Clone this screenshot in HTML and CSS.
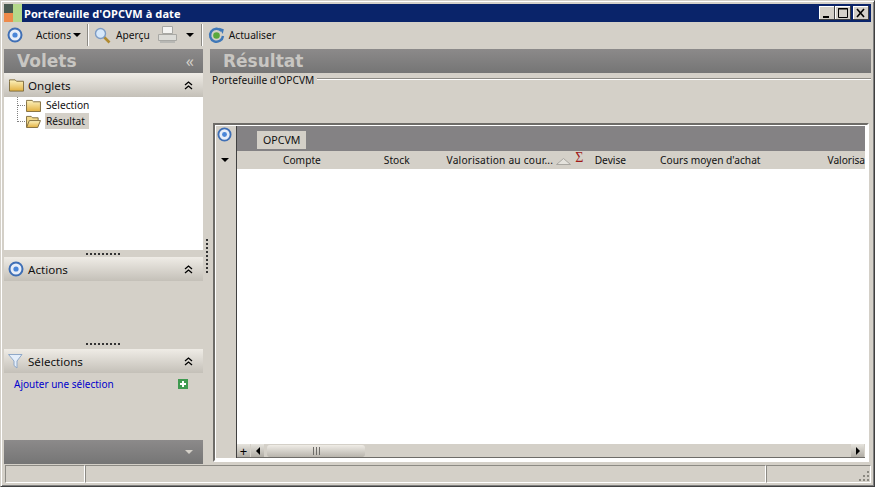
FILE: index.html
```html
<!DOCTYPE html>
<html lang="fr">
<head>
    <meta charset="UTF-8">
    <title>Portefeuille d'OPCVM à date</title>
    <link rel="stylesheet" href="styles.css">
</head>
<body>
<svg class="defs" width="0" height="0">
    <defs>
        <linearGradient id="folderFill" x1="0" y1="0" x2="0" y2="1">
            <stop offset="0" stop-color="#fdf3c0"/>
            <stop offset="1" stop-color="#e2b040"/>
        </linearGradient>
        <symbol id="target" viewBox="0 0 16 16">
            <circle cx="8" cy="8" r="6.5" fill="#e8eef8" stroke="#3f6fb5" stroke-width="2"/>
            <circle cx="8" cy="8" r="2.6" fill="#4a86d8"/>
        </symbol>
        <symbol id="folder" viewBox="0 0 16 14">
            <path d="M.5 3V1.5h6L8 3h7.5v10.5H.5z" fill="url(#folderFill)" stroke="#7d6a3a"/>
        </symbol>
        <symbol id="folderOpen" viewBox="0 0 16 14">
            <path d="M.5 13V1.5h5L7 3h6v3" fill="#f2d98a" stroke="#7d6a3a"/>
            <path d="M.5 13.5 3.5 6h12l-3 7.5z" fill="url(#folderFill)" stroke="#7d6a3a"/>
        </symbol>
    </defs>
</svg>
<div class="window">
    <div class="titlebar">
        <svg class="app-icon" width="18" height="18" viewBox="0 0 18 18">
            <rect width="9" height="9" fill="#4a5a50"/>
            <rect x="9" width="9" height="18" fill="#b4d88a"/>
            <rect y="9" width="9" height="9" fill="#ee8a4a"/>
        </svg>
        <span class="title-text">Portefeuille d'OPCVM à date</span>
        <div class="win-buttons">
            <div class="win-btn"><svg width="16" height="14"><rect x="4" y="10" width="6" height="2" fill="#000"/></svg></div>
            <div class="win-btn"><svg width="16" height="14"><path d="M3.5 2.5h9v9h-9z M3 3h10" fill="none" stroke="#000"/></svg></div>
            <div class="win-btn win-btn-close"><svg width="16" height="14"><path d="M4 3l7 8M11 3l-7 8" stroke="#000" stroke-width="1.6"/></svg></div>
        </div>
    </div>

    <div class="toolbar">
        <svg class="tb-target" width="16" height="16"><use href="#target"/></svg>
        <span class="tb-label tb-actions">Actions</span><span class="caret"></span>
        <span class="tb-sep"></span>
        <svg class="tb-zoom" width="17" height="17" viewBox="0 0 17 17">
            <path d="M10 10l5.500 5.500" stroke="#b08a30" stroke-width="2.600"/>
            <circle cx="6.500" cy="6.500" r="5" fill="#d6e8fa" stroke="#7d9cc4" stroke-width="1.400"/>
        </svg>
        <span class="tb-label tb-apercu">Aperçu</span>
        <svg class="tb-print" width="19" height="18" viewBox="0 0 19 18">
            <path d="M4.500.5h10v7h-10z" fill="#f4f4f2" stroke="#a8a8a4"/>
            <path d="M.5 8.500h18v6H.5z" fill="#dcdcd8" stroke="#a8a8a4"/>
            <path d="M2 15h15v2H2z" fill="#b8b8b4"/>
        </svg>
        <span class="caret caret-print"></span>
        <span class="tb-sep"></span>
        <svg class="tb-refresh" width="17" height="17" viewBox="0 0 17 17">
            <path d="M13.500 4A6.500 6.500 0 1 0 15 9" fill="none" stroke="#3f78b8" stroke-width="2.400"/>
            <path d="M11 .8l4.800 1.500-1 4.700z" fill="#3f78b8"/>
            <circle cx="8.500" cy="8.500" r="3.300" fill="#5aa83c"/>
        </svg>
        <span class="tb-label tb-refresh-label">Actualiser</span>
    </div>

    <div class="main">
        <div class="sidebar">
            <div class="dark-head">
                <span class="dark-title">Volets</span>
                <span class="collapse-left">«</span>
            </div>

            <div class="section-head">
                <svg class="section-folder" width="15" height="14"><use href="#folder"/></svg>
                <span class="section-label">Onglets</span>
                <span class="chevrons">
                    <svg width="9" height="9" viewBox="0 0 9 9"><path d="M1 4l3.500-3L8 4M1 8l3.500-3L8 8" fill="none" stroke="#000" stroke-width="1.300"/></svg>
                </span>
            </div>
            <div class="tree">
                <div class="tree-row">
                    <span class="tree-line"></span>
                    <svg width="15" height="13"><use href="#folder"/></svg>
                    <span class="tree-label">Sélection</span>
                </div>
                <div class="tree-row">
                    <span class="tree-line tree-line-last"></span>
                    <svg width="15" height="13"><use href="#folderOpen"/></svg>
                    <span class="tree-label tree-label-active">Résultat</span>
                </div>
            </div>
            <div class="grip"><span class="grip-dots"></span></div>

            <div class="section-head">
                <svg width="16" height="16"><use href="#target"/></svg>
                <span class="section-label">Actions</span>
                <span class="chevrons">
                    <svg width="9" height="9" viewBox="0 0 9 9"><path d="M1 4l3.500-3L8 4M1 8l3.500-3L8 8" fill="none" stroke="#000" stroke-width="1.300"/></svg>
                </span>
            </div>
            <div class="actions-body"></div>
            <div class="grip"><span class="grip-dots"></span></div>

            <div class="section-head">
                <svg width="16" height="16" viewBox="0 0 16 16"><path d="M.5 1.500h13.500L9 8v7L6 12.500V8z" fill="#e4eefa" stroke="#8fa8c8"/></svg>
                <span class="section-label">Sélections</span>
                <span class="chevrons">
                    <svg width="9" height="9" viewBox="0 0 9 9"><path d="M1 4l3.500-3L8 4M1 8l3.500-3L8 8" fill="none" stroke="#000" stroke-width="1.300"/></svg>
                </span>
            </div>
            <div class="selections-body">
                <span class="add-link">Ajouter une sélection</span>
                <svg class="add-icon" width="10" height="10" viewBox="0 0 10 10">
                    <rect width="10" height="10" fill="#3f9a50"/>
                    <path d="M5 2v6M2 5h6" stroke="#fff" stroke-width="2"/>
                </svg>
            </div>
            <div class="dark-foot"><span class="foot-caret"></span></div>
        </div>

        <div class="splitter"><span class="splitter-dots"></span></div>

        <div class="content">
            <div class="dark-head">
                <span class="dark-title result-title">Résultat</span>
            </div>
            <div class="group-line">
                <span class="group-label">Portefeuille d'OPCVM</span>
                <span class="group-rule"></span>
            </div>
            <div class="grid">
                <div class="grid-side">
                    <svg class="grid-target" width="15" height="15"><use href="#target"/></svg>
                    <span class="grid-caret"></span>
                </div>
                <div class="grid-main">
                    <div class="band"><span class="band-tag">OPCVM</span></div>
                    <div class="cols">
                        <span class="col col-compte">Compte</span>
                        <span class="col col-stock">Stock</span>
                        <span class="col col-valo">Valorisation au cour...</span>
                        <svg class="sort-icon" width="15" height="7" viewBox="0 0 15 7"><path d="M.5 6.500 7.500.5l7 6z" fill="#e4e2dc" stroke="#a8a6a0"/></svg>
                        <span class="sigma">Σ</span>
                        <span class="col col-devise">Devise</span>
                        <span class="col col-cours">Cours moyen d'achat</span>
                        <span class="col col-valo2">Valorisa</span>
                    </div>
                    <div class="rows"></div>
                    <div class="scroll">
                        <span class="scroll-plus">+</span>
                        <span class="scroll-btn"><span class="arrow-left"></span></span>
                        <span class="scroll-track">
                            <span class="scroll-thumb"><span class="thumb-lines"></span></span>
                        </span>
                        <span class="scroll-btn scroll-btn-right"><span class="arrow-right"></span></span>
                    </div>
                </div>
            </div>
        </div>
    </div>

    <div class="statusbar">
        <div class="status-cell status-a"></div>
        <div class="status-cell status-b"></div>
        <div class="status-cell status-c">
            <svg class="resize-grip" width="10" height="10" viewBox="0 0 10 10">
                <path d="M8 0h2v2H8zM4 4h2v2H4zM8 4h2v2H8zM0 8h2v2H0zM4 8h2v2H4zM8 8h2v2H8z" fill="#8a8880"/>
            </svg>
        </div>
    </div>
</div>
</body>
</html>
```

FILE: styles.css
```css
html, body { margin: 0; padding: 0; height: 100%; overflow: hidden; }
body { font-family: "Noto Sans", "Liberation Sans", sans-serif; font-size: 10.2px; color: #111; background: #d4d0c8; }
.defs { position: absolute; }
svg { display: block; flex: none; }

.window { width: 875px; height: 487px; box-sizing: border-box; padding: 3px; display: flex; flex-direction: column; background: #d4d0c8;
    border: 1px solid #404040; border-top-color: #d4d0c8; border-left-color: #d4d0c8;
    box-shadow: inset 1px 1px #fff, inset -1px -1px #808080; }

/* title bar */
.titlebar { height: 18px; flex: none; display: flex; align-items: center; background: #0a246a; color: #fff; }
.title-text { margin-left: 2px; font-weight: bold; font-size: 11px; letter-spacing: .08px; }
.win-buttons { margin-left: auto; margin-right: 2px; display: flex; }
.win-btn { width: 16px; height: 14px; background: #d4d0c8; box-shadow: inset -1px -1px #404040, inset 1px 1px #fff; }
.win-btn-close { margin-left: 2px; }

/* toolbar */
.toolbar { height: 26px; flex: none; display: flex; align-items: center; }
.tb-target { margin-left: 3px; }
.tb-actions { margin-left: 13px; }
.caret { width: 0; height: 0; margin-left: 2px; border-left: 4px solid transparent; border-right: 4px solid transparent; border-top: 4px solid #000; }
.tb-sep { width: 1px; height: 22px; margin-left: 6px; background: #8c8a84; border-right: 1px solid #fff; }
.tb-zoom { margin-left: 5px; }
.tb-apercu { margin-left: 5px; }
.tb-print { margin-left: 8px; }
.caret-print { margin-left: 9px; }
.caret-print + .tb-sep { margin-left: 7px; }
.tb-refresh { margin-left: 5px; }
.tb-refresh-label { margin-left: 4px; }

/* main split */
.main { flex: 1; min-height: 0; display: flex; margin-top: 1px; }
.sidebar { width: 199px; flex: none; display: flex; flex-direction: column; }
.dark-head { height: 24px; flex: none; display: flex; align-items: center; background: linear-gradient(#8c8a8a, #757575); }
.dark-title { margin-left: 13px; font-family: "DejaVu Sans", sans-serif; font-size: 17px; font-weight: bold; color: #c8c6c2; }
.collapse-left { margin-left: auto; margin-right: 9px; font-size: 16px; line-height: 16px; color: #d4d0c8; }
.section-head { height: 24px; flex: none; display: flex; align-items: center; padding-left: 4px; background: linear-gradient(#efece6, #c4c0b8); }
.section-folder { margin-left: 1px; }
.section-label { margin-left: 4px; font-size: 11.6px; }
.chevrons { margin-left: auto; margin-right: 10px; }

.tree { height: 153px; flex: none; background: #fff; }
.tree-row { height: 16px; display: flex; align-items: center; }
.tree-line { width: 7px; height: 8px; margin-left: 13px; margin-right: 1px; border-bottom: 1px dotted #808080; border-left: 1px dotted #808080; transform: translateY(-4px); }
.tree-line-last { height: 16px; transform: translateY(-8px); }
.tree-label { margin-left: 4px; padding: 0 2px 0 1px; height: 16px; line-height: 16px; }
.tree-label-active { background: #d4d0c8; min-width: 41px; }
.grip { height: 7px; flex: none; display: flex; justify-content: center; align-items: center; }
.grip-dots { width: 35px; height: 2px; background: repeating-linear-gradient(90deg, #333 0 2px, transparent 2px 4px); }
.actions-body { height: 58px; flex: none; }
.actions-body + .grip { height: 10px; }
.selections-body { flex: 1; min-height: 0; display: flex; align-items: flex-start; padding: 5px 0 0 10px; }
.add-link { color: #0000cc; font-size: 10px; line-height: 12px; }
.add-icon { margin-left: auto; margin-right: 15px; margin-top: 1px; }
.dark-foot { height: 24px; flex: none; display: flex; align-items: center; justify-content: flex-end; background: linear-gradient(#8c8a8a, #757575); }
.foot-caret { margin-right: 10px; border-left: 4px solid transparent; border-right: 4px solid transparent; border-top: 4px solid #d4d0c8; }

.splitter { width: 7px; flex: none; display: flex; align-items: center; justify-content: center; }
.splitter-dots { width: 2px; height: 36px; background: repeating-linear-gradient(#333 0 2px, transparent 2px 4px); }

/* right side */
.content { flex: 1; min-width: 0; display: flex; flex-direction: column; }
.result-title { margin-left: 13px; }
.group-line { height: 50px; flex: none; display: flex; align-items: flex-start; padding-left: 2px; }
.group-label { line-height: 14px; }
.group-rule { flex: 1; height: 1px; margin: 5px 0 0 3px; background: #8c8a84; border-bottom: 1px solid #fff; }

.grid { height: 339px; flex: none; box-sizing: border-box; margin: 0 2px 0 3px; display: flex; background: #fff; border: 2px solid #fff; border-top-color: #6e6c68; border-left-color: #6e6c68; padding: 1px 0 2px 1px; }
.grid-side { width: 20px; flex: none; position: relative; background: #d4d0c8; border-right: 1px solid #404040; }
.grid-target { position: absolute; left: 1px; top: 1px; }
.grid-caret { position: absolute; left: 5px; top: 32px; border-left: 4px solid transparent; border-right: 4px solid transparent; border-top: 4px solid #000; }
.grid-main { flex: 1; min-width: 0; display: flex; flex-direction: column; margin-right: 2px; }
.band { height: 25px; flex: none; display: flex; align-items: center; background: #848284; }
.band-tag { margin-left: 20px; margin-top: 2px; padding: 0 6px; height: 18px; line-height: 18px; background: #d4d0c8; font-size: 10.6px; }
.cols { height: 18px; flex: none; display: flex; align-items: center; background: #d4d0c8; white-space: nowrap; }
.col-compte { margin-left: 46px; }
.col-stock { margin-left: 63px; }
.col-valo { margin-left: 37px; letter-spacing: .2px; }
.sort-icon { margin-left: 3px; margin-top: 2px; }
.sigma { width: 10px; margin-left: 4px; color: #a01818; font-family: "Liberation Serif", serif; font-size: 14px; line-height: 18px; height: 18px; margin-top: -4px; }
.col-devise { margin-left: 11px; }
.col-cours { margin-left: 34px; }
.col-valo2 { margin-left: 67px; letter-spacing: -.05px; }
.rows { flex: 1; min-height: 0; background: #fff; }

.scroll { height: 13px; flex: none; display: flex; align-items: stretch; background: #d4d0c8; border-bottom: 1px solid #6e6c68; }
.scroll-plus { width: 13px; margin-right: 1px; text-align: center; font-size: 13px; line-height: 14px; color: #000; background: linear-gradient(#e6e4de, #b0aca4); }
.scroll-btn { width: 13px; display: flex; align-items: center; justify-content: center; background: linear-gradient(#e6e4de, #b0aca4); }
.scroll-btn-right { margin-right: 1px; }
.arrow-left { border-top: 4px solid transparent; border-bottom: 4px solid transparent; border-right: 4px solid #000; }
.arrow-right { border-top: 4px solid transparent; border-bottom: 4px solid transparent; border-left: 4px solid #000; }
.scroll-track { flex: 1; display: flex; align-items: center; padding-left: 3px; }
.scroll-thumb { width: 98px; height: 12px; display: flex; align-items: center; justify-content: center; border-radius: 3px; background: linear-gradient(#efece6, #b8b4ac); }
.thumb-lines { width: 7px; height: 8px; background: repeating-linear-gradient(90deg, #6e6c68 0 1px, transparent 1px 3px); }

/* status bar */
.statusbar { height: 18px; flex: none; display: flex; margin-top: 1px; }
.status-cell { box-sizing: border-box; position: relative; border: 1px solid; border-color: #8c8a84 #fff #fff #8c8a84; }
.status-a { width: 80px; margin-left: 1px; }
.status-b { flex: 1; }
.status-c { width: 105px; }
.resize-grip { position: absolute; right: 1px; bottom: 1px; }
```
